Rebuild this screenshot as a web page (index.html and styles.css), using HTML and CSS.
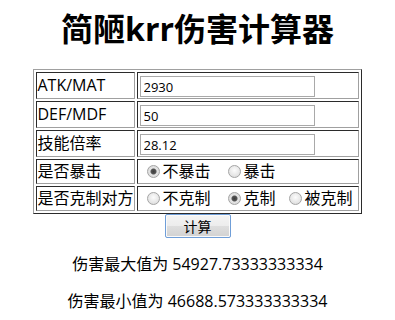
FILE: index.html
```html
<!DOCTYPE html>
<html lang="zh-CN">
<head>
    <meta charset="UTF-8">
    <title>简陋krr伤害计算器</title>
    <link rel="stylesheet" href="styles.css">
</head>
<body>

    <h1 class="title">简陋krr伤害计算器</h1>

    <table class="calc">
        <tr class="row-input">
            <td class="label">ATK/MAT</td>
            <td><input class="num" type="text" value="2930"></td>
        </tr>
        <tr class="row-input">
            <td class="label">DEF/MDF</td>
            <td><input class="num" type="text" value="50"></td>
        </tr>
        <tr class="row-input">
            <td class="label">技能倍率</td>
            <td><input class="num" type="text" value="28.12"></td>
        </tr>
        <tr class="row-radio">
            <td class="label">是否暴击</td>
            <td>
                <div class="opts">
                    <label class="opt"><input type="radio" name="crit" checked>不暴击</label>
                    <label class="opt"><input type="radio" name="crit">暴击</label>
                </div>
            </td>
        </tr>
        <tr class="row-radio">
            <td class="label">是否克制对方</td>
            <td>
                <div class="opts">
                    <label class="opt"><input type="radio" name="counter">不克制</label>
                    <label class="opt"><input type="radio" name="counter" checked>克制</label>
                    <label class="opt"><input type="radio" name="counter">被克制</label>
                </div>
            </td>
        </tr>
    </table>

    <div class="actions">
        <button class="btn" type="button">计算</button>
    </div>

    <p class="result">伤害最大值为 54927.73333333334</p>
    <p class="result">伤害最小值为 46688.573333333334</p>

</body>
</html>
```

FILE: styles.css
```css
body {
    margin: 8px;
    background: white;
    color: black;
    font-family: "Open Sans", "Noto Sans CJK SC", sans-serif;
    font-size: 16px;
    line-height: 21px;
}

.title {
    font-size: 32px;
    font-weight: bold;
    line-height: 42px;
    text-align: center;
    margin: 0 0 19px;
}

.calc {
    margin: 0 auto;
    border-collapse: separate;
    border-spacing: 2px;
    border: 1px solid;
    border-color: #a0a0a0 #2b2b2b #2b2b2b #a0a0a0;
}

.calc td {
    padding: 0;
    border: 1px solid;
    border-color: #2b2b2b #a0a0a0 #a0a0a0 #2b2b2b;
    width: 220px;
    vertical-align: middle;
}

.calc td.label {
    width: 96px;
    white-space: nowrap;
}

.row-input td {
    height: 25px;
}

.row-radio td {
    height: 23px;
}

.num {
    display: block;
    box-sizing: border-box;
    width: 175px;
    height: 21px;
    margin: 3px 0 1px 2px;
    padding: 0 3px;
    border: 1px solid #a9a9a9;
    font-family: "Open Sans", "Noto Sans CJK SC", sans-serif;
    font-size: 13px;
    color: black;
    outline: none;
}

.opts {
    display: flex;
    align-items: center;
    padding-left: 9px;
    white-space: nowrap;
}

.opt {
    display: flex;
    align-items: center;
    margin-right: 13px;
}

.opt:first-child {
    margin-right: 17px;
}

.opt:last-child {
    margin-right: 0;
}

.opt input {
    appearance: none;
    -webkit-appearance: none;
    box-sizing: border-box;
    flex: none;
    width: 13px;
    height: 13px;
    margin: 0 3px 0 0;
    border: 1px solid #a4a4a4;
    border-radius: 50%;
    background: radial-gradient(circle at 50% 40%, #fcfcfc 0, #e6e6e6 60%, #d4d4d4 100%);
}

.opt input:checked {
    background: radial-gradient(circle, #3c3c3c 0, #555 2.5px, #e4e4e4 3.5px, #d4d4d4 100%);
}

.actions {
    text-align: center;
    height: 24px;
}

.btn {
    box-sizing: border-box;
    width: 66px;
    height: 24px;
    padding: 0;
    border: 1px solid #6f9ed8;
    border-radius: 2px;
    background: linear-gradient(#f4f4f4, #ececec 50%, #dedede 51%, #d2d2d2);
    box-shadow: inset 0 0 0 1px #fafafa;
    font-family: "Noto Sans CJK SC", sans-serif;
    font-size: 14px;
    color: black;
    vertical-align: top;
}

.result {
    text-align: center;
    margin: 16px 0;
}
```
